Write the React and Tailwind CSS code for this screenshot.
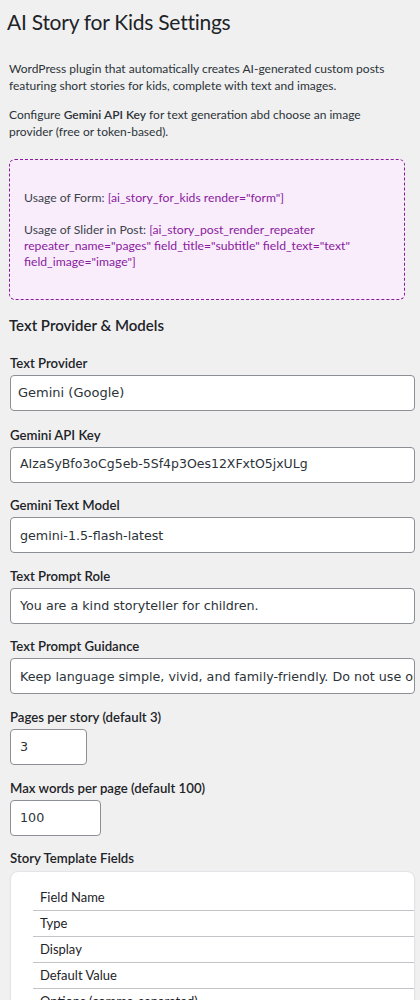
export default function App() {
  const font = { fontFamily: 'Lato, "Noto Sans", sans-serif' };
  const inputFont = '[font-family:"DejaVu_Sans",sans-serif]';
  const Field = ({ label, value, w = "w-[405px]", size = "text-[12.7px]" }) => (
    <div className="mt-[12.6px]">
      <div className="text-[13.2px] font-semibold leading-[20px] text-[#1d2327]">{label}</div>
      <div className={`mt-[2px] h-[36px] ${w} bg-white border border-[#8c8f94] rounded-[4px] flex items-center px-[9px] overflow-hidden whitespace-nowrap ${size} text-[#2c3338] ${inputFont}`}>
        {value}
      </div>
    </div>
  );
  return (
    <div className="min-h-[1000px] bg-[#f0f0f1] text-[#1d2327] overflow-hidden" style={font}>
      <div className="pl-[9px] pr-[5px]">
        <h1 className="pt-[7px] -ml-[2px] text-[21px] tracking-[-0.25px] leading-[30px] font-normal text-[#1d2327]">AI Story for Kids Settings</h1>
        <p className="mt-[23px] text-[12px] leading-[17px] text-[#2c3338]">
          WordPress plugin that automatically creates AI-generated custom posts featuring short stories for kids, complete with text and images.
        </p>
        <p className="mt-[12px] w-[375px] text-[12px] leading-[17px] text-[#2c3338]">
          Configure <span className="font-semibold">Gemini API Key</span> for text generation abd choose an image provider (free or token-based).
        </p>
        <div className="mt-[19px] w-[396px] h-[141px] border border-dashed border-[#8a1b9c] rounded-[6px] bg-[#f9edfc] px-[14px] pt-[30px] text-[12.2px] leading-[16px] text-[#3c434a]">
          <div>Usage of Form: <span className="text-[#8a1a9e]">[ai_story_for_kids render="form"]</span></div>
          <div className="mt-[16px]">Usage of Slider in Post: <span className="text-[#8a1a9e]">[ai_story_post_render_repeater repeater_name="pages" field_title="subtitle" field_text="text" field_image="image"]</span></div>
        </div>
        <h2 className="mt-[14px] text-[15px] leading-[22px] font-semibold text-[#1d2327]">Text Provider &amp; Models</h2>
        <div className="pl-[1px]">
          <div className="mt-[17px]">
            <div className="text-[13.2px] font-semibold leading-[20px] text-[#1d2327]">Text Provider</div>
            <div className={`mt-[2px] h-[36px] w-[405px] bg-white border border-[#8c8f94] rounded-[4px] flex items-center px-[7px] text-[13px] text-[#2c3338] ${inputFont}`}>Gemini (Google)</div>
          </div>
          <div className="h-[1px]" />
          <Field label="Gemini API Key" value="AIzaSyBfo3oCg5eb-5Sf4p3Oes12XFxtO5jxULg" size="text-[12.5px]" />
          <Field label="Gemini Text Model" value="gemini-1.5-flash-latest" />
          <Field label="Text Prompt Role" value="You are a kind storyteller for children." />
          <Field label="Text Prompt Guidance" value="Keep language simple, vivid, and family-friendly. Do not use only" />
          <Field label="Pages per story (default 3)" value="3" w="w-[77px]" />
          <Field label="Max words per page (default 100)" value="100" w="w-[91px]" />
          <div className="mt-[12.6px] text-[13.2px] font-semibold leading-[20px] text-[#1d2327]">Story Template Fields</div>
          <div className="mt-[3px] w-[405px] h-[200px] bg-white rounded-[8px] border border-[#e2e4e7] shadow-[0_1px_2px_rgba(0,0,0,0.06)] pl-[22px] pt-[13px] text-[13px] text-[#1d2327]">
            {["Field Name", "Type", "Display", "Default Value", "Options (comma-separated)"].map((t) => (
              <div key={t} className="h-[26px] border-b border-[#c3c4c7] pl-[7px] flex items-center">{t}</div>
            ))}
          </div>
        </div>
      </div>
    </div>
  );
}
